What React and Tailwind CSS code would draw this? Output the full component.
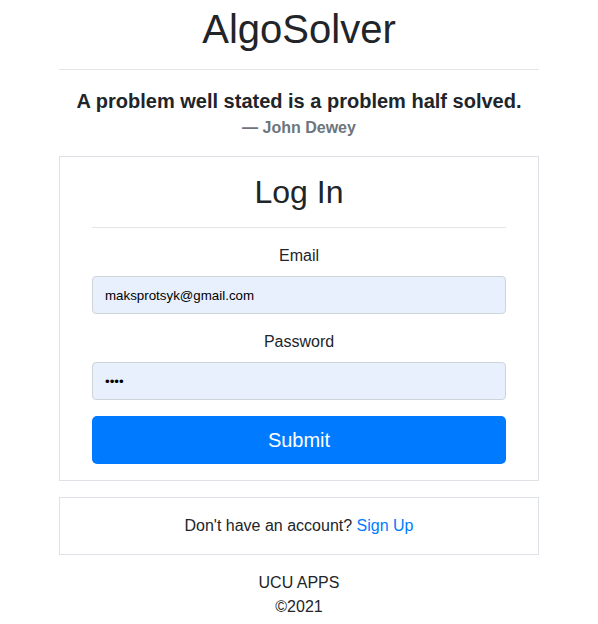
import React from 'react';

const App = () => {
  return (
    <div className="min-h-screen bg-white text-[#212529] font-['Liberation_Sans',Arial,sans-serif]">
      <div className="w-[480px] mx-auto text-center">
        <h1 className="pt-[5px] text-[40px] leading-[48px] font-normal">AlgoSolver</h1>
        <hr className="mt-4 border-t border-[#e5e5e5]" />

        <blockquote className="mt-4">
          <p className="text-[20px] leading-[30px] font-bold">
            A problem well stated is a problem half solved.
          </p>
          <footer className="text-[16px] leading-[24px] font-bold text-[#6c757d]">
            — John Dewey
          </footer>
        </blockquote>

        <div className="mt-4 border border-[#dee2e6] px-8 pt-4 pb-4">
          <h2 className="text-[32px] leading-[38px] font-normal">Log In</h2>
          <hr className="mt-4 border-t border-[#e5e5e5]" />

          <form onSubmit={(e) => e.preventDefault()}>
            <label className="block mt-4 mb-2 text-[16px] leading-[24px]">Email</label>
            <input
              type="email"
              defaultValue="maksprotsyk@gmail.com"
              className="block w-full h-[38px] px-3 rounded border border-[#ced4da] bg-[#e8f0fe] text-[13.333px] text-black outline-none"
            />

            <label className="block mt-4 mb-2 text-[16px] leading-[24px]">Password</label>
            <input
              type="password"
              defaultValue="1234"
              className="block w-full h-[38px] px-3 rounded border border-[#ced4da] bg-[#e8f0fe] text-[13.333px] text-black outline-none"
            />

            <button
              type="submit"
              className="mt-4 w-full h-12 rounded-[5px] bg-[#007bff] text-white text-[20px]"
            >
              Submit
            </button>
          </form>
        </div>

        <div className="mt-4 border border-[#dee2e6] py-4 text-[16px] leading-[24px]">
          Don't have an account? <a href="#" className="text-[#007bff]">Sign Up</a>
        </div>

        <div className="mt-4 text-[16px] leading-[24px]">
          <p>UCU APPS</p>
          <p>©2021</p>
        </div>
      </div>
    </div>
  );
};

export default App;
